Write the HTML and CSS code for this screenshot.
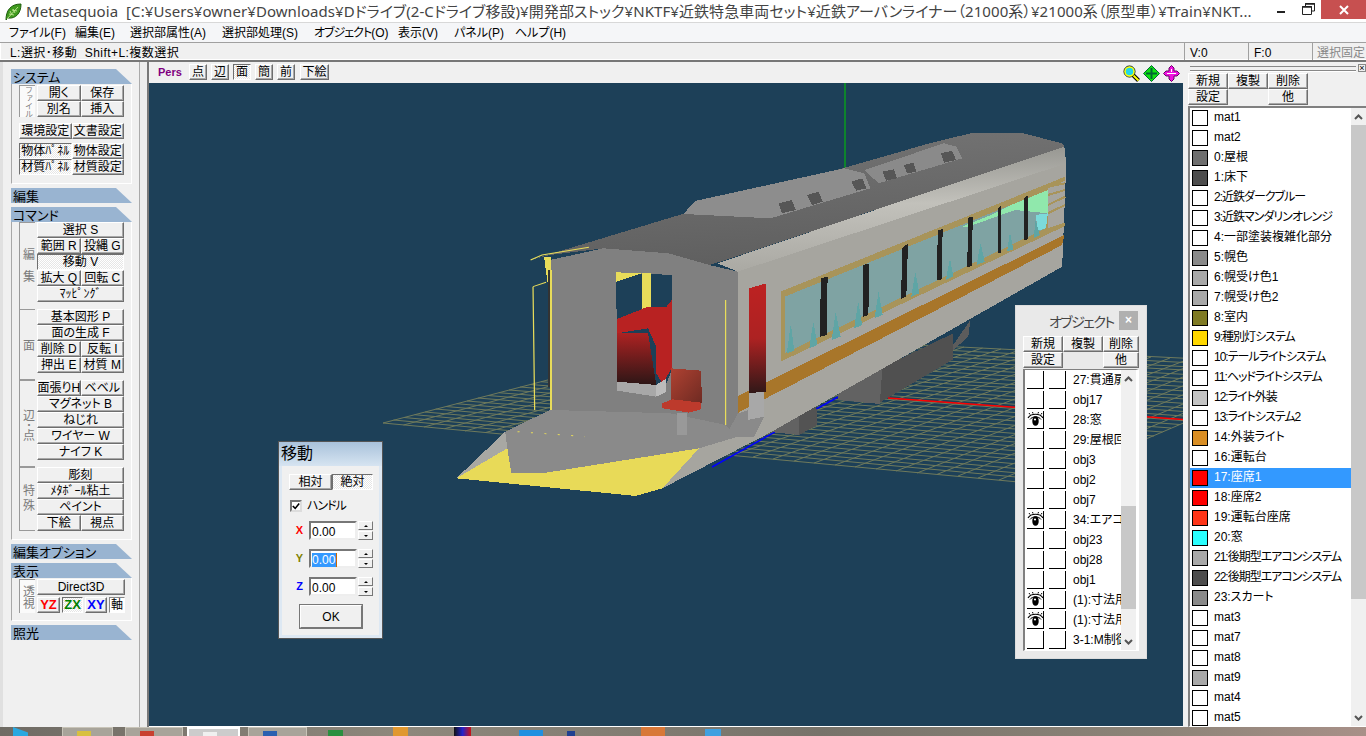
FILE: index.html
```html
<!DOCTYPE html>
<html lang="ja">
<head>
<meta charset="utf-8">
<title>Metasequoia</title>
<link rel="stylesheet" href="styles.css">
</head>
<body>
<svg class="defs" width="0" height="0" aria-hidden="true">
  <symbol id="eye" viewBox="0 0 17 17">
    <path d="M1 7 C4 2 13 2 16 7" fill="none" stroke="#000" stroke-width="1.200"/>
    <path d="M3 8.500 C5 5 12 5 14 8.500" fill="none" stroke="#000"/>
    <path d="M3 3.500 L2 2 M6 2.500 L5.500 1 M11 2.500 L11.500 1 M14 3.500 L15 2" stroke="#000"/>
    <ellipse cx="8.500" cy="10" rx="3.200" ry="4.800" fill="#000"/>
    <circle cx="8" cy="8.500" r="1.100" fill="#fff"/>
  </symbol>
  <symbol id="up" viewBox="0 0 9 6"><path d="M1 5 L4.500 1.500 L8 5" fill="none" stroke="#555" stroke-width="2"/></symbol>
  <symbol id="down" viewBox="0 0 9 6"><path d="M1 1 L4.500 4.500 L8 1" fill="none" stroke="#555" stroke-width="2"/></symbol>
</svg>
<div class="app">
  <header class="titlebar">
    <svg class="leaf" width="17" height="18" viewBox="0 0 17 18"><path d="M1 17 C1 8 5 1 16 1 C16 10 11 16 3 15Z" fill="#3f9a1e" stroke="#1d5c0c"/><path d="M2 16 L13 4 M5 8 L7 12 M8 6 L10 10 M4 11 L9 12 M7 7 L12 8" stroke="#b8e08a" fill="none"/></svg>
    <div class="title-text">Metasequoia&nbsp; [C:¥Users¥owner¥Downloads¥Dドライブ(2-Cドライブ移設)¥開発部ストック¥NKTF¥近鉄特急車両セット¥近鉄アーバンライナー（21000系）¥21000系（原型車）¥Train¥NKT...</div>
    <div class="winctl">
      <span class="min"></span>
      <svg class="restore" width="13" height="12" viewBox="0 0 13 12"><path d="M3.500 3 V.5 H12.500 V8 H10 M.5 3.500 H9.500 V11.500 H.5Z" fill="none" stroke="#222"/><path d="M3 1 H13 M0 4 H10" stroke="#222" stroke-width="1.500"/></svg>
      <span class="close"><svg width="10" height="10" viewBox="0 0 10 10"><path d="M1 1 L9 9 M9 1 L1 9" stroke="#fff" stroke-width="2"/></svg></span>
    </div>
  </header>
  <nav class="menubar">
    <span class="m1">ファイル(F)</span><span class="m2">編集(E)</span><span class="m3">選択部属性(A)</span><span class="m4">選択部処理(S)</span><span class="m5"><em class="nk">オブジェクト</em>(O)</span><span class="m6">表示(V)</span><span class="m7">パネル(P)</span><span class="m8">ヘルプ(H)</span>
  </nav>
  <div class="statusbar">
    <div class="hint">L:選択･移動&nbsp; Shift+L:複数選択</div>
    <div class="stat s-v">V:0</div>
    <div class="stat s-f">F:0</div>
    <div class="stat s-lock">選択固定</div>
  </div>
  <main class="main">
    <aside class="left">
      <div class="left-inner">
        <div class="sec">システム</div>
        <div class="box box-sys">
          <div class="grp">
            <div class="vlabel filled lab-sys">ファイル</div>
            <div class="btns">
              <button class="b">開く</button><button class="b">保存</button>
              <button class="b">別名</button><button class="b">挿入</button>
            </div>
          </div>
          <div class="btns wide-btns mt6">
            <button class="b">環境設定</button><button class="b">文書設定</button>
          </div>
          <div class="btns wide-btns mt4">
            <button class="b on">物体ﾊﾟﾈﾙ</button><button class="b">物体設定</button>
            <button class="b on">材質ﾊﾟﾈﾙ</button><button class="b">材質設定</button>
          </div>
        </div>
        <div class="sec mt4">編集</div>
        <div class="sec mt4">コマンド</div>
        <div class="box box-cmd">
          <div class="grp">
            <div class="vlabel lined lab-edit">編集</div>
            <div class="btns mb7">
              <button class="b span">選択 S</button>
              <button class="b">範囲 R</button><button class="b">投縄 G</button>
              <button class="b on span">移動 V</button>
              <button class="b">拡大 Q</button><button class="b">回転 C</button>
              <button class="b span">ﾏｯﾋﾟﾝｸﾞ</button>
            </div>
          </div>
          <div class="grp">
            <div class="vlabel lined closed">面</div>
            <div class="btns mb7">
              <button class="b span">基本図形 P</button>
              <button class="b span">面の生成 F</button>
              <button class="b">削除 D</button><button class="b">反転 I</button>
              <button class="b">押出 E</button><button class="b">材質 M</button>
            </div>
          </div>
          <div class="grp">
            <div class="vlabel lined closed lab-edge">辺･点</div>
            <div class="btns mb7">
              <button class="b">面張りH</button><button class="b">ベベル</button>
              <button class="b span">マグネット B</button>
              <button class="b span">ねじれ</button>
              <button class="b span">ワイヤー W</button>
              <button class="b span">ナイフ K</button>
            </div>
          </div>
          <div class="grp">
            <div class="vlabel lined closed lab-spec">特殊</div>
            <div class="btns">
              <button class="b span">彫刻</button>
              <button class="b span">ﾒﾀﾎﾞｰﾙ粘土</button>
              <button class="b span">ペイント</button>
              <button class="b">下絵</button><button class="b">視点</button>
            </div>
          </div>
        </div>
        <div class="sec mt4">編集オプション</div>
        <div class="sec mt4">表示</div>
        <div class="box box-view">
          <div class="grp">
            <div class="vlabel filled lab-view">透視</div>
            <div class="view-col">
              <button class="b d3d">Direct3D</button>
              <div class="axes">
                <button class="b ax ax-yz">YZ</button>
                <button class="b on ax ax-zx">ZX</button>
                <button class="b ax ax-xy">XY</button>
                <button class="b ax-j">軸</button>
              </div>
            </div>
          </div>
        </div>
        <div class="sec mt4">照光</div>
      </div>
      <div class="splitter"></div>
    </aside>

    <section class="viewport">
      <div class="vp-bar">
        <span class="pers">Pers</span>
        <button class="b vb">点</button>
        <button class="b vb">辺</button>
        <button class="b on vb">面</button>
        <button class="b vb">簡</button>
        <button class="b vb">前</button>
        <button class="b vb vb-wide">下絵</button>
        <div class="vp-icons">
          <svg width="17" height="17" viewBox="0 0 17 17"><path d="M10 10 L15.500 15.500" stroke="#000" stroke-width="4"/><path d="M10 10 L15.500 15.500" stroke="#ff0" stroke-width="2"/><circle cx="6.500" cy="6.500" r="5.500" fill="#20d8e8" stroke="#000"/><circle cx="6.500" cy="6.500" r="4.500" fill="none" stroke="#ff0" stroke-width="1.500"/></svg>
          <svg width="17" height="17" viewBox="0 0 17 17"><path d="M8.500 .5 L16.500 8.500 L8.500 16.500 L.5 8.500Z" fill="#10e010" stroke="#063"/><path d="M8.500 3 V14 M3 8.500 H14" stroke="#063" stroke-width="2"/></svg>
          <svg width="17" height="17" viewBox="0 0 17 17"><path d="M8.500 .5 L11 3 V6 H14 L16.500 8.500 L14 11 H11 V14 L8.500 16.500 L6 14 V11 H3 L.5 8.500 L3 6 H6 V3Z" fill="#f010e0" stroke="#606"/><path d="M4 8.500 H13 M8.500 4 V7" stroke="#fff"/></svg>
        </div>
      </div>
      <div class="canvas">
        <svg class="scene" width="1034" height="643" viewBox="149 83 1034 643">
          <defs>
            <linearGradient id="roofG" x1="0" y1="0" x2=".25" y2="1"><stop offset="0" stop-color="#757575"/><stop offset="1" stop-color="#606060"/></linearGradient>
            <linearGradient id="railG" x1="0" y1="0" x2=".08" y2="1"><stop offset="0" stop-color="#8f8f8a"/><stop offset=".5" stop-color="#c2c1bb"/><stop offset="1" stop-color="#aaa9a3"/></linearGradient>
            <linearGradient id="seatG" x1="0" y1="0" x2="0" y2="1"><stop offset="0" stop-color="#ac2222"/><stop offset="1" stop-color="#2c1616"/></linearGradient>
            <linearGradient id="seatF" x1="0" y1="0" x2="1" y2="1"><stop offset="0" stop-color="#b04232"/><stop offset="1" stop-color="#6e2a22"/></linearGradient>
            <linearGradient id="doorG" x1="0" y1="0" x2="0" y2="1"><stop offset="0" stop-color="#bd2222"/><stop offset=".5" stop-color="#ad2222"/><stop offset="1" stop-color="#301818"/></linearGradient>
          </defs>
          <g class="grid">
            <path d="M383 423L720 335M424 427L757.500 337M465 431L795 339M506 434L832.500 341M547 438L870 343M588 442L907.500 344M629 446L945 346M670 450L982.500 348M711 453L1020 350M753 457L1057.500 352M794 461L1095 354M835 465L1132.500 356M876 469L1170 358M917 473L1207.500 359M958 476L1245 361M999 480L1282.500 363M1040 484L1320 365"/>
            <path d="M403.500 425L739 336M444.600 428.700L776 338M485.700 432.500L814 340M526.700 436.300L851 342M567.800 440L889 343M608.800 444L926 345M650 448L964 347M691 451.600L1001 349M732 455.400L1039 351M773 459L1076 353M814 463L1114 355M855 467L1151 357M896 471L1189 359M937 474.400L1226 360M978 478L1264 362M1019 482L1301 364"/>
            <path d="M383 423L1040 484M404 417.500L1057.500 476.600M425 412L1075 469M446 406.500L1092.500 461.700M467 401L1110 454M488 395.500L1127.500 447M509 390L1145 439M530 384.500L1162.500 432M551.500 379L1180 424.500M572.500 373.500L1197.500 417M593.600 368L1215 410M614.700 362.500L1232.500 402M635.700 357L1250 395M657 351.500L1267.500 387M678 346L1285 380M699 340.500L1302.500 373M720 335L1320 365"/>
            <path d="M393.500 420L1049 480M414.600 414.700L1066 473M435.600 409L1084 465M456.700 403.700L1101 458M477.800 398L1119 450.500M498.800 392.700L1136 443M520 387L1154 436M541 381.700L1171 428M562 376L1189 421M583 370.700L1206 413M604 365L1224 406M625 360L1241 399M646 354L1259 391M667 349L1276 384M688 343L1294 376M709.500 338L1311 369"/>
          </g>
          <path d="M845 83V170" stroke="#00c800" fill="none"/>
          <path d="M888 398L1190 420" stroke="#f00" stroke-width="1.500" fill="none"/>
          <path d="M712 467L838 397" stroke="#00f" stroke-width="1.500" fill="none"/>
          <g class="train" transform="translate(440 120) scale(.408 .3333)">
            <polygon fill="#5c5c5c" points="1255,680 1300,600 1295,650 1258,690"/>
            <polygon fill="#505050" points="1075,850 1080,745 1258,640 1258,718"/>
            <polygon fill="#626262" points="975,840 975,790 1085,730 1078,852"/>
            <polygon fill="#535353" points="880,945 880,860 922,850 925,915"/>
            <polygon fill="#626262" points="800,935 880,870 880,945"/>

            <polygon fill="#a6a59f" points="730,455 1535,130 1525,440 806,940 545,1105 635,985 730,950"/>
            <polygon fill="#a8762a" points="728,830 1530,345 1525,375 728,880"/>

            <polygon fill="#a8945a" points="835,515 1532,170 1532,182 1490,205 1490,325 1532,308 1532,318 835,725"/>
            <polygon fill="#7fa3a3" points="845,530 1490,210 1485,325 845,700"/>
            <path d="M1490 200L1532 190M1490 225L1532 210M1490 255L1532 230M1490 280L1532 255" stroke="#a8945a" stroke-width="6" fill="none"/>
            <polygon fill="#90e8ac" points="1280,320 1360,280 1400,255 1490,210 1490,280 1410,270 1290,322"/>
            <polygon fill="#7cdada" points="1460,285 1490,280 1485,325 1465,332"/>
            <path d="M860 610L850 700L868 692ZM915 605L905 685L925 675ZM970 575L960 660L982 650ZM1025 545L1015 625L1035 615ZM1075 515L1065 595L1085 585ZM1165 455L1155 530L1175 520ZM1250 415L1240 480L1258 470ZM1325 370L1315 435L1335 425ZM1397 335L1390 395L1405 388ZM1460 300L1455 355L1470 345Z" fill="#5fa5a5"/>
            <g fill="#222">
              <polygon points="933,475 950,470 948,645 932,650"/>
              <polygon points="1037,435 1052,430 1050,585 1037,590"/>
              <polygon points="1133,385 1147,370 1143,530 1130,537"/>
              <polygon points="1220,330 1232,328 1230,478 1218,482"/>
              <polygon points="1295,293 1306,290 1303,438 1292,442"/>
              <polygon points="1367,268 1376,255 1374,398 1367,400"/>
              <polygon points="1432,235 1442,225 1441,358 1432,360"/>
            </g>

            <polygon fill="url(#railG)" points="680,430 1530,78 1535,130 730,455"/>
            <polygon fill="url(#roofG)" points="222,420 600,280 1200,70 1300,40 1430,40 1525,70 1530,80 700,420 660,435 560,400 400,385 270,405"/>
            <polygon fill="#8d8d8d" points="597,282 625,243 990,145 1040,160 1055,205 810,295"/>
            <polygon fill="#8a8a8a" points="1040,150 1235,70 1265,80 1280,115 1075,190"/>
            <g fill="#565656">
              <polygon points="830,250 862,240 872,270 838,280"/>
              <polygon points="900,225 928,215 938,245 912,255"/>
              <polygon points="1008,185 1035,175 1045,205 1020,212"/>
              <polygon points="1085,155 1113,148 1120,175 1093,182"/>
              <polygon points="1137,135 1160,128 1168,155 1145,160"/>
              <polygon points="1228,100 1255,92 1265,120 1235,128"/>
            </g>

            <polygon fill="#808080" points="270,420 400,385 560,400 660,435 730,455 730,880 730,950 700,915 565,880 270,870"/>
            <polygon fill="#1d4058" points="432,457 568,465 568,750 555,790 530,830 434,812"/>
            <polygon fill="#e8dc5a" points="432,457 495,460 432,485"/>
            <polygon fill="#e8dc5a" points="495,460 518,460 518,570 495,570"/>
            <polygon fill="url(#seatG)" points="434,640 510,640 530,795 434,785"/>
            <polygon fill="#b82222" points="434,597 490,570 510,560 555,560 568,540 568,745 555,772 545,790 530,760 530,680 510,625 434,640"/>
            <polygon fill="#a8a8a8" points="434,785 530,795 530,830 434,812"/>
            <polygon fill="#bcbcbc" points="530,795 555,775 555,815 530,830"/>

            <polygon fill="#8a8a8a" points="160,935 270,870 565,880 700,915 730,950 635,985 250,1060 175,1060 165,985"/>
            <polygon fill="#a8a8a3" points="160,935 40,1075 165,985"/>
            <polygon fill="#e8da58" points="165,985 40,1075 480,1128 545,1105 635,985 250,1060 175,1060"/>
            <polygon fill="#8a8a8a" points="730,880 758,870 755,900 795,890 770,950 700,950"/>

            <polygon fill="#999" points="580,878 605,878 605,945 580,945"/>
            <polygon fill="url(#seatF)" points="565,745 640,752 642,850 565,845"/>
            <polygon fill="#bd3a2c" points="545,850 570,838 640,848 640,868 610,878 545,865"/>

            <polygon fill="url(#doorG)" points="758,505 800,490 798,815 758,820"/>
            <polygon fill="#a8a8a8" points="758,820 795,815 795,890 755,900"/>

            <path d="M222 420L250 405L365 382M228 500L260 487M228 500L232 870M700 540L700 915" stroke="#e8dc5a" stroke-width="3" fill="none"/>
            <polygon fill="#e8dc5a" points="255,410 272,410 272,450 265,500"/>
            <path d="M268 450V800" stroke="#333" stroke-width="5" fill="none"/>
            <path d="M272 450V870" stroke="#e8dc5a" stroke-width="4" fill="none"/>
            <path d="M190 935L355 950" stroke="#e8dc5a" stroke-width="3" stroke-dasharray="5 28" fill="none"/>
          </g>
        </svg>

        <div class="move-panel">
          <div class="mv-title">移動</div>
          <div class="mv-body">
            <div class="seg"><button class="b seg-a">相対</button><button class="b on seg-b">絶対</button></div>
            <label class="chk"><span class="chk-box"><svg width="10" height="10" viewBox="0 0 10 10"><path d="M1 5 L4 8 L9 2" fill="none" stroke="#000" stroke-width="2"/></svg></span>ハンドル</label>
            <div class="field"><span class="axl ax-r">X</span><div class="inp">0.00</div><div class="spin"><span><i class="tri-u"></i></span><span><i class="tri-d"></i></span></div></div>
            <div class="field"><span class="axl ax-y">Y</span><div class="inp"><span class="sel">0.00</span></div><div class="spin"><span><i class="tri-u"></i></span><span><i class="tri-d"></i></span></div></div>
            <div class="field"><span class="axl ax-b">Z</span><div class="inp">0.00</div><div class="spin"><span><i class="tri-u"></i></span><span><i class="tri-d"></i></span></div></div>
            <button class="ok">OK</button>
          </div>
        </div>

        <div class="obj-panel">
          <div class="obj-head"><span class="obj-title">オブジェクト</span><span class="obj-x">×</span></div>
          <div class="obj-btns">
            <button class="b">新規</button><button class="b">複製</button><button class="b">削除</button>
            <button class="b">設定</button><span></span><button class="b">他</button>
          </div>
          <div class="obj-list">
            <div class="obj-rows">
              <div class="orow"><i class="ck"></i><i class="ck"></i><span>27:貫通扉</span></div>
              <div class="orow"><i class="ck"></i><i class="ck"></i><span>obj17</span></div>
              <div class="orow"><i class="ck"><svg width="17" height="17"><use href="#eye"/></svg></i><i class="ck"></i><span>28:窓</span></div>
              <div class="orow"><i class="ck"></i><i class="ck"></i><span>29:屋根回り</span></div>
              <div class="orow"><i class="ck"></i><i class="ck"></i><span>obj3</span></div>
              <div class="orow"><i class="ck"></i><i class="ck"></i><span>obj2</span></div>
              <div class="orow"><i class="ck"></i><i class="ck"></i><span>obj7</span></div>
              <div class="orow"><i class="ck"><svg width="17" height="17"><use href="#eye"/></svg></i><i class="ck"></i><span>34:エアコン</span></div>
              <div class="orow"><i class="ck"></i><i class="ck"></i><span>obj23</span></div>
              <div class="orow"><i class="ck"></i><i class="ck"></i><span>obj28</span></div>
              <div class="orow"><i class="ck"></i><i class="ck"></i><span>obj1</span></div>
              <div class="orow"><i class="ck"><svg width="17" height="17"><use href="#eye"/></svg></i><i class="ck"></i><span>(1):寸法用</span></div>
              <div class="orow"><i class="ck"><svg width="17" height="17"><use href="#eye"/></svg></i><i class="ck"></i><span>(1):寸法用</span></div>
              <div class="orow"><i class="ck"></i><i class="ck"></i><span>3-1:M制御</span></div>
            </div>
            <div class="sbar obj-sbar">
              <div class="sb-arrow"><svg width="9" height="6"><use href="#up"/></svg></div>
              <div class="sb-space obj-space"></div>
              <div class="sb-thumb obj-thumb"></div>
              <div class="sb-fill"></div>
              <div class="sb-arrow"><svg width="9" height="6"><use href="#down"/></svg></div>
            </div>
          </div>
        </div>
      </div>
    </section>

    <aside class="right">
      <div class="handle"><span class="handle-lines"></span><span class="handle-x">×</span></div>
      <div class="mat-btns">
        <button class="b">新規</button><button class="b">複製</button><button class="b">削除</button>
        <button class="b">設定</button><span></span><button class="b">他</button>
      </div>
      <div class="mat-list">
        <div class="mat-rows">
          <div class="mrow"><i class="sw"></i><span>mat1</span></div>
          <div class="mrow"><i class="sw"></i><span>mat2</span></div>
          <div class="mrow"><i class="sw c-roof"></i><span>0:屋根</span></div>
          <div class="mrow"><i class="sw c-dark"></i><span>1:床下</span></div>
          <div class="mrow"><i class="sw"></i><span class="nk">2:近鉄ダークブルー</span></div>
          <div class="mrow"><i class="sw"></i><span class="nk">3:近鉄マンダリンオレンジ</span></div>
          <div class="mrow"><i class="sw"></i><span>4:一部塗装複雑化部分</span></div>
          <div class="mrow"><i class="sw c-mid"></i><span>5:幌色</span></div>
          <div class="mrow"><i class="sw c-gray"></i><span>6:幌受け色1</span></div>
          <div class="mrow"><i class="sw c-gray"></i><span>7:幌受け色2</span></div>
          <div class="mrow"><i class="sw c-olive"></i><span>8:室内</span></div>
          <div class="mrow"><i class="sw c-gold"></i><span class="nk">9:種別灯システム</span></div>
          <div class="mrow"><i class="sw"></i><span class="nk">10:テールライトシステム</span></div>
          <div class="mrow"><i class="sw"></i><span class="nk">11:ヘッドライトシステム</span></div>
          <div class="mrow"><i class="sw c-light"></i><span class="nk">12:ライト外装</span></div>
          <div class="mrow"><i class="sw"></i><span class="nk">13:ライトシステム2</span></div>
          <div class="mrow"><i class="sw c-orange"></i><span>14:外装ライト</span></div>
          <div class="mrow"><i class="sw"></i><span>16:運転台</span></div>
          <div class="mrow selected"><i class="sw c-red"></i><span>17:座席1</span></div>
          <div class="mrow"><i class="sw c-red"></i><span>18:座席2</span></div>
          <div class="mrow"><i class="sw c-redo"></i><span>19:運転台座席</span></div>
          <div class="mrow"><i class="sw c-cyan"></i><span>20:窓</span></div>
          <div class="mrow"><i class="sw c-gray"></i><span class="nk">21:後期型エアコンシステム</span></div>
          <div class="mrow"><i class="sw c-dark"></i><span class="nk">22:後期型エアコンシステム</span></div>
          <div class="mrow"><i class="sw c-mid"></i><span>23:スカート</span></div>
          <div class="mrow"><i class="sw"></i><span>mat3</span></div>
          <div class="mrow"><i class="sw"></i><span>mat7</span></div>
          <div class="mrow"><i class="sw"></i><span>mat8</span></div>
          <div class="mrow"><i class="sw c-gray"></i><span>mat9</span></div>
          <div class="mrow"><i class="sw"></i><span>mat4</span></div>
          <div class="mrow"><i class="sw"></i><span>mat5</span></div>
        </div>
        <div class="sbar mat-sbar">
          <div class="sb-arrow"><svg width="9" height="6"><use href="#up"/></svg></div>
          <div class="sb-thumb mat-thumb"></div>
          <div class="sb-fill"></div>
          <div class="sb-arrow"><svg width="9" height="6"><use href="#down"/></svg></div>
        </div>
      </div>
    </aside>
  </main>
  <footer class="taskbar">
    <i class="t-start"></i>
    <i class="t-btn t1"><b class="k-yellow"></b></i>
    <i class="t-btn t2"><b class="k-red"></b></i>
    <i class="t-btn t3"><b class="k-white"></b></i>
    <i class="t-btn t4"><b class="k-blue"></b></i>
    <i class="t-ic k-green"></i>
    <i class="t-ic k-orange"></i>
    <i class="t-ic k-black"></i>
    <i class="t-ic k-sky"></i>
    <i class="t-ic k-navy"></i>
    <i class="t-ic k-brick"></i>
    <i class="t-ic k-ie"></i>
    <i class="t-rest"></i>
  </footer>
</div>
</body>
</html>
```
FILE: styles.css
```css
* { box-sizing: border-box; }
html, body { margin: 0; padding: 0; }
body {
  width: 1366px; height: 736px; overflow: hidden;
  background: #f0f0f0; color: #000;
  font: 12px/1 "Liberation Sans", "Noto Sans CJK JP", sans-serif;
  font-feature-settings: "palt";
}
.defs { position: absolute; }
.app { display: flex; flex-direction: column; width: 1366px; height: 736px; }
.nk { font-style: normal; letter-spacing: -1px; }

/* title */
.titlebar { height: 22px; background: #fff; display: flex; align-items: center; padding-left: 5px; flex: none; }
.leaf { flex: none; margin-top: 1px; }
.title-text { margin-left: 4px; width: 1240px; white-space: nowrap; overflow: hidden; color: #444;
  font: 15px/20px "Noto Sans", "Noto Sans CJK JP", sans-serif; font-feature-settings: "palt"; letter-spacing: .07px; }
.winctl { margin-left: auto; display: flex; align-items: center; height: 22px; align-self: flex-start; }
.min { width: 8px; height: 2px; background: #222; margin-right: 17px; margin-top: 2px; }
.restore { margin-right: 6px; margin-top: -5px; }
.close { width: 45px; height: 19px; background: #c75050; display: flex; align-items: center; justify-content: center; align-self: flex-start; }

/* menu */
.menubar { height: 20px; flex: none; background: #f5f6f8; border-top: 1px solid #d8d8d8; display: flex; align-items: center; padding-left: 9px; }
.menubar span { display: block; white-space: nowrap; }
.m1 { width: 66px; } .m2 { width: 55px; } .m3 { width: 92px; } .m4 { width: 92px; }
.m5 { width: 84px; } .m6 { width: 56px; } .m7 { width: 61px; } .m8 { width: 60px; }

/* status */
.statusbar { height: 20px; flex: none; background: #f0f0f0; border-top: 1px solid #a0a0a0; border-bottom: 2px solid #777;
  display: flex; align-items: stretch; position: relative; box-shadow: inset 0 -1px #fff; }
.hint { width: 1185px; padding: 4px 0 0 9px; border-left: 1px solid #fff; border-right: 1px solid #a0a0a0; letter-spacing: .45px; white-space: nowrap; }
.stat { padding: 4px 0 0 5px; border-right: 1px solid #a0a0a0; white-space: nowrap; }
.s-v { width: 64px; } .s-f { width: 64px; }
.s-lock { flex: 1; border-right: 0; color: #888; padding-left: 4px; font-size: 12px; overflow: hidden; }

/* layout */
.main { height: 665px; flex: none; display: flex; }
.left { width: 149px; flex: none; display: flex; background: #f0f0f0; border-right: 2px solid #777; }
.left-inner { width: 140px; padding: 7px 0 0 8px; border-left: 3px solid #e0e0e0; border-right: 1px solid #aaa; }
.splitter { flex: 1; background: #ececec; }
.viewport { width: 1034px; flex: none; display: flex; flex-direction: column; border-bottom: 1px solid #fff; }
.right { flex: 1; margin-left: 3px; display: flex; flex-direction: column; }

/* section heads */
.sec { width: 121px; height: 15px; background: #99b4d1; padding: 2px 0 0 2px; font-size: 13px; line-height: 13px;
  clip-path: polygon(0 0, 105px 0, 100% 100%, 0 100%); white-space: nowrap; }
.mt4 { margin-top: 4px; }
.mt6 { margin-top: 6px; }
.mb7 { margin-bottom: 7px; }

.box { width: 121px; border-left: 1px solid #a8a8a8; border-right: 1px solid #fff; border-bottom: 1px solid #fff; padding-left: 7px; padding-right: 7px; }
.box-sys { height: 100px; padding-top: 1px; }
.box-cmd { height: 318px; }
.box-view { height: 43px; padding-top: 1px; }
.grp { display: flex; }
.vlabel { width: 16px; flex: none; margin-right: 2px; writing-mode: vertical-rl; text-orientation: upright; display: flex; align-items: center; justify-content: center;
  color: #7c7c7c; font-size: 12px; border-left: 1px solid #999; white-space: nowrap; overflow: hidden; }
.filled { background: #fafafa; border-top: 1px solid #999; }
.lined { border-top: 1px solid #999; }
.closed { border-bottom: 1px solid #999; }
.lab-sys { font-size: 8px; height: 32px; }
.lab-edit { letter-spacing: 10px; padding-top: 8px; }
.lab-edge { letter-spacing: -2px; }
.lab-spec { letter-spacing: 3px; }

/* buttons */
button { font: inherit; color: inherit; padding: 0; margin: 0; }
.b { height: 16px; background: #f0f0f0; border: 1px solid; border-color: #fff #6e6e6e #6e6e6e #fff; box-shadow: inset -1px -1px #a8a8a8;
  display: flex; align-items: center; justify-content: center; white-space: nowrap; overflow: hidden; font-size: 12px; line-height: 14px; }
.b.on { border-color: #6e6e6e #fff #fff #6e6e6e; box-shadow: none;
  background: repeating-conic-gradient(#fff 0 25%, #e6e6e6 0 50%) 0 0 / 2px 2px; }
.btns { display: grid; grid-template-columns: repeat(2, 1fr); grid-auto-rows: 16px; width: 87px; flex: none; }
.wide-btns { width: 105px; }
.span { grid-column: span 2; }

.view-col { width: 88px; }
.d3d { width: 88px; }
.axes { display: flex; margin-top: 2px; height: 16px; }
.ax { width: 23px; font-weight: 700; font-size: 13px; }
.ax-zx { width: 21px; margin-left: 2px; color: #008000; }
.ax-yz { color: #f00; }
.ax-xy { width: 22px; margin-left: 2px; color: #00f; }
.ax-j { width: 16px; margin-left: 2px; height: 16px; background: #fff; border-color: #888 #fff #fff #888; box-shadow: none; }

/* viewport toolbar */
.vp-bar { height: 21px; flex: none; background: #f0f0f0; display: flex; align-items: flex-start; padding: 2px 0 0 9px; }
.pers { width: 31px; margin-top: 3px; font: 700 11px/11px "Liberation Sans", sans-serif; color: #800080; }
.vb { width: 18px; margin-right: 4px; }
.vb-wide { width: 29px; margin-left: 1px; }
.vp-icons { margin-left: auto; margin-right: 3px; display: flex; gap: 3px; margin-top: 1px; }

.canvas { flex: 1; position: relative; background: #1d4058; overflow: hidden; }
.scene { display: block; }
.grid path { stroke: #6f7a5c; stroke-width: 1; fill: none; }
.train { shape-rendering: crispEdges; }

/* move panel */
.move-panel { position: absolute; left: 129px; top: 358px; width: 105px; border: 1px solid #555; background: #f0f0f0; }
.mv-title { height: 24px; background: linear-gradient(#a9c2db, #d6e4f1); font-size: 16px; line-height: 24px; padding-left: 2px; }
.mv-body { border: 3px solid #dde8f3; border-top: 0; padding: 8px 0 6px 7px; background: #f0f0f0; }
.seg { display: flex; }
.seg-a { width: 43px; }
.seg-b { width: 41px; }
.chk { display: flex; align-items: center; height: 12px; margin: 10px 0 0 1px; gap: 5px; letter-spacing: -1px; }
.chk-box { width: 12px; height: 12px; background: #fff; border: 2px solid; border-color: #777 #ddd #ddd #777; display: flex; align-items: center; justify-content: center; overflow: hidden; flex: none; }
.field { display: flex; height: 19px; margin-top: 9px; }
.axl { width: 20px; font-weight: 700; font-size: 11px; line-height: 19px; text-align: center; padding-left: 1px; }
.ax-r { color: #f00; } .ax-y { color: #808000; } .ax-b { color: #00f; }
.inp { width: 48px; background: #fff; border: 2px solid; border-color: #777 #eee #eee #777; padding: 2px 0 0 1px; font-size: 12px; line-height: 14px; }
.sel { display: inline-block; background: #3399ff; color: #fff; padding-right: 1px; border-right: 1px solid #c60; }
.spin { width: 15px; margin-left: 1px; display: flex; flex-direction: column; gap: 1px; }
.spin span { flex: 1; background: #f0f0f0; border: 1px solid; border-color: #fff #777 #777 #fff; display: flex; align-items: center; justify-content: center; }
.tri-u, .tri-d { width: 0; height: 0; border-left: 2px solid transparent; border-right: 2px solid transparent; }
.tri-u { border-bottom: 2px solid #000; }
.tri-d { border-top: 2px solid #000; }
.ok { display: block; width: 64px; height: 25px; margin: 8px 0 0 10px; background: #f0f0f0; border: 2px solid; border-color: #fff #777 #777 #fff; outline: 1px solid #777; outline-offset: -1px; font-size: 12px; }

/* object panel */
.obj-panel { position: absolute; left: 866px; top: 222px; width: 132px; height: 354px; background: #e9e9e9; border: 1px solid #ddd; padding: 5px 0 0 7px; }
.obj-head { height: 25px; display: flex; align-items: flex-start; }
.obj-title { width: 96px; padding: 4px 0 0 26px; font-size: 14px; line-height: 14px; color: #444; white-space: nowrap; letter-spacing: -1.5px; }
.obj-x { width: 19px; height: 19px; background: #b0b0b0; color: #fff; font-weight: 700; font-size: 12px; line-height: 18px; text-align: center; }
.obj-btns { display: grid; grid-template-columns: 40px 40px 36px; grid-auto-rows: 16px; }
.obj-list { display: flex; width: 116px; height: 282px; margin-top: 1px; border-left: 2px solid #808080; border-top: 1px solid #808080; border-right: 3px solid #fff; border-bottom: 1px solid #fff; background: #fff; }
.obj-rows { width: 96px; overflow: hidden; }
.orow { height: 20px; display: flex; align-items: center; white-space: nowrap; padding-left: 2px; gap: 5px; }
.ck { display: block; width: 17px; height: 18px; flex: none; background: #fff; border-right: 1px solid #000; border-bottom: 1px solid #000; }
.ck svg { display: block; }
.orow span { margin-left: 2px; color: #000; }
.sbar { width: 15px; flex: none; background: #f0f0f0; display: flex; flex-direction: column; }
.sb-arrow { height: 17px; display: flex; align-items: center; justify-content: center; flex: none; }
.sb-thumb { background: #c8c8c8; flex: none; }
.sb-fill { flex: 1; }
.obj-space { height: 119px; flex: none; }
.obj-thumb { height: 103px; }
.mat-thumb { height: 474px; }

/* right panel */
.handle { height: 11px; display: flex; align-items: flex-start; padding-top: 2px; }
.handle-lines { margin: 2px 0 0 4px; width: 166px; height: 5px; border-top: 1px solid #888; border-bottom: 1px solid #888; box-shadow: 0 1px #fff; }
.handle-x { margin-left: 2px; width: 8px; height: 8px; font-size: 9px; line-height: 7px; border: 1px solid #888; text-align: center; overflow: hidden; }
.mat-btns { display: grid; grid-template-columns: repeat(3, 40px); grid-auto-rows: 16px; margin-left: 2px; }
.mat-list { display: flex; margin: 1px 0 0 2px; height: 621px; background: #fff; border-left: 2px solid #808080; border-top: 2px solid #808080; border-bottom: 1px solid #fff; overflow: hidden; }
.mat-rows { width: 161px; flex: none; }
.mrow { height: 20px; display: flex; align-items: center; padding-left: 2px; white-space: nowrap; }
.mrow span { margin-top: -2px; }
.sw { display: block; width: 16px; height: 16px; border: 1px solid #000; background: #fff; margin-right: 6px; flex: none; }
.selected { background: #3399ff; color: #fff; }
.mat-sbar { flex: 1; }
.c-roof { background: #6e6e6e; } .c-dark { background: #4d4d4d; } .c-mid { background: #8a8a8a; }
.c-gray { background: #a8a8a8; } .c-olive { background: #7f7a24; } .c-gold { background: #ffd800; }
.c-light { background: #c4c4c4; } .c-orange { background: #d98e24; } .c-red { background: #f00; }
.c-redo { background: #ff3518; } .c-cyan { background: #2affff; }

/* taskbar */
.taskbar { flex: 1; display: flex; background: linear-gradient(90deg, #6f6b64, #8e887c 30%, #77736a 60%, #8d8478 85%, #a89088); overflow: hidden; }
.taskbar i { display: block; flex: none; }
.t-start { width: 15px; margin-left: 13px; background: #2aa8e0; clip-path: polygon(0 0, 100% 60%, 100% 100%, 0 100%); }
.t-btn { height: 9px; background: #a8a49a; border: 1px solid #c8c4b8; border-bottom: 0; }
.t-btn b { display: block; width: 14px; height: 6px; margin: 3px 0 0 14px; }
.t1 { width: 51px; margin-left: 34px; } .t2 { width: 58px; margin-left: 12px; }
.t3 { width: 53px; margin-left: 4px; background: #ccc; border: 2px solid #fff; border-bottom: 0; }
.t4 { width: 59px; margin-left: 8px; }
.k-yellow { background: #d8c040; } .k-red { background: #c84030; } .k-white { background: #f0f0f0; }
.k-blue { background: #2a60b0; }
.t-ic { width: 15px; height: 9px; }
.k-green { margin: 3px 0 0 21px; background: #2a9040; }
.k-orange { margin: 0 0 0 50px; background: #e09830; }
.k-black { margin: 0 0 0 46px; background: linear-gradient(90deg, #111, #22c 50%, #c11); width: 17px; }
.k-sky { margin: 3px 0 0 48px; width: 24px; background: #2090e0; }
.k-navy { margin: 4px 0 0 24px; width: 8px; background: #204090; }
.k-brick { margin: 0 0 0 66px; width: 24px; background: #d87838; }
.k-ie { margin: 2px 0 0 40px; width: 16px; background: #40a0e0; }
.t-rest { flex: 1; }
```
